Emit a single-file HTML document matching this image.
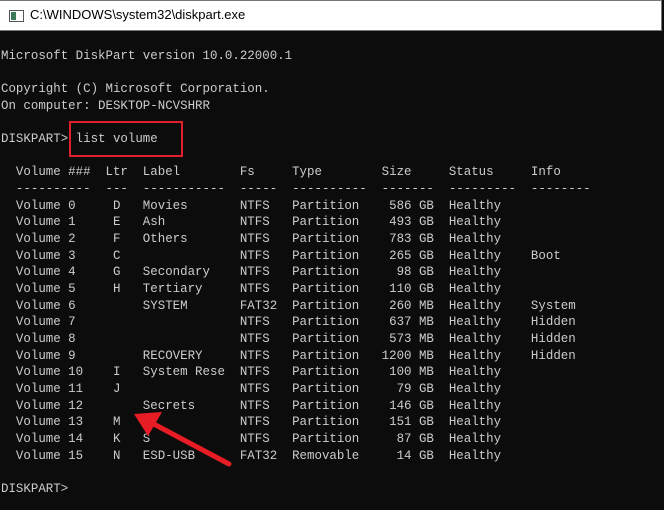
<!DOCTYPE html>
<html><head><style>
body{margin:0;width:664px;height:510px;background:#0c0c0c;overflow:hidden;position:relative}
.tb{position:absolute;left:0;top:0;width:661px;height:29px;background:#fff;border:1px solid #777;border-left:none}
.tb span{position:absolute;left:30px;top:6px;font:13px "Liberation Sans",sans-serif;color:#000}
.ic{position:absolute;left:9px;top:9px;width:13px;height:10px;border:1px solid #555;background:#fff}
.ic:before{content:"";position:absolute;left:1px;top:1px;width:5px;height:8px;background:#3a7a5a}
pre{position:absolute;left:1px;top:31px;margin:0;font:12.45px/16.67px "Liberation Mono",monospace;color:#cccccc}
.box{position:absolute;left:69px;top:121px;width:110px;height:32px;border:2px solid #e0202a}
</style></head><body>
<div class="tb"><div class="ic"></div><span>C:\WINDOWS\system32\diskpart.exe</span></div>
<pre>

Microsoft DiskPart version 10.0.22000.1

Copyright (C) Microsoft Corporation.
On computer: DESKTOP-NCVSHRR

DISKPART&gt; list volume

  Volume ###  Ltr  Label        Fs     Type        Size     Status     Info
  ----------  ---  -----------  -----  ----------  -------  ---------  --------
  Volume 0     D   Movies       NTFS   Partition    586 GB  Healthy
  Volume 1     E   Ash          NTFS   Partition    493 GB  Healthy
  Volume 2     F   Others       NTFS   Partition    783 GB  Healthy
  Volume 3     C                NTFS   Partition    265 GB  Healthy    Boot
  Volume 4     G   Secondary    NTFS   Partition     98 GB  Healthy
  Volume 5     H   Tertiary     NTFS   Partition    110 GB  Healthy
  Volume 6         SYSTEM       FAT32  Partition    260 MB  Healthy    System
  Volume 7                      NTFS   Partition    637 MB  Healthy    Hidden
  Volume 8                      NTFS   Partition    573 MB  Healthy    Hidden
  Volume 9         RECOVERY     NTFS   Partition   1200 MB  Healthy    Hidden
  Volume 10    I   System Rese  NTFS   Partition    100 MB  Healthy
  Volume 11    J                NTFS   Partition     79 GB  Healthy
  Volume 12        Secrets      NTFS   Partition    146 GB  Healthy
  Volume 13    M                NTFS   Partition    151 GB  Healthy
  Volume 14    K   S            NTFS   Partition     87 GB  Healthy
  Volume 15    N   ESD-USB      FAT32  Removable     14 GB  Healthy

DISKPART&gt;</pre>
<div class="box"></div>
<svg style="position:absolute;left:0;top:0" width="664" height="510">
<line x1="229" y1="464" x2="150" y2="422" stroke="#e81c24" stroke-width="5" stroke-linecap="round"/>
<polygon points="134,414 162,412 148,436" fill="#e81c24"/>
</svg>
</body></html>
